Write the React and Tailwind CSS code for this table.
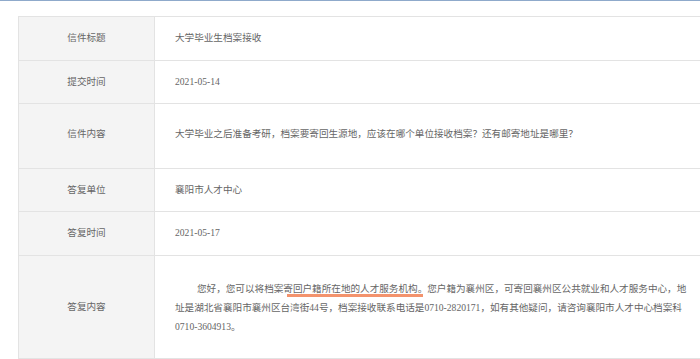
const rows = [
  { label: '信件标题', value: '大学毕业生档案接收', h: 'h-[44px]' },
  { label: '提交时间', value: '2021-05-14', h: 'h-[43px]' },
  {
    label: '信件内容',
    value: '大学毕业之后准备考研，档案要寄回生源地，应该在哪个单位接收档案？还有邮寄地址是哪里？',
    h: 'h-[65px]',
    pad: 'pb-[4px]',
  },
  { label: '答复单位', value: '襄阳市人才中心', h: 'h-[43px]' },
  { label: '答复时间', value: '2021-05-17', h: 'h-[44px]' },
];

function Row({ label, h, pad = '', children }) {
  return (
    <div className={`flex ${h} border-b border-[#e3e3e3]`}>
      <div
        className={`w-[136px] shrink-0 flex items-center justify-center bg-[#f4f4f4] border-r border-[#e3e3e3] ${pad}`}
      >
        {label}
      </div>
      <div className={`flex-1 flex items-center pl-[20px] ${pad}`}>{children}</div>
    </div>
  );
}

export default function App() {
  return (
    <div
      className="w-[700px] h-[359px] overflow-hidden bg-white border-t border-[#8faacb] pt-[15px] text-[9.6px] text-[#666]"
      style={{ fontFamily: '"Liberation Serif", "Noto Sans CJK SC", serif' }}
    >
      <div className="ml-[18px] w-[720px] border-l border-t border-[#e3e3e3]">
        {rows.map((r) => (
          <Row key={r.label} label={r.label} h={r.h} pad={r.pad}>
            {r.value}
          </Row>
        ))}
        <Row label="答复内容" h="h-[103px]">
          <p className="w-[516px] leading-[19px] indent-[22px]">
            您好，您可以将档案
            <span className="relative">
              寄回户籍所在地的人才服务机构。
              <span className="absolute left-[4px] right-[4px] bottom-[-3px] h-[3px] bg-[#f3936d]" />
            </span>
            您户籍为襄州区，可寄回襄州区公共就业和人才服务中心，地址是湖北省襄阳市襄州区台湾街44号，档案接收联系电话是0710-2820171，如有其他疑问，请咨询襄阳市人才中心档案科0710-3604913。
          </p>
        </Row>
      </div>
    </div>
  );
}
